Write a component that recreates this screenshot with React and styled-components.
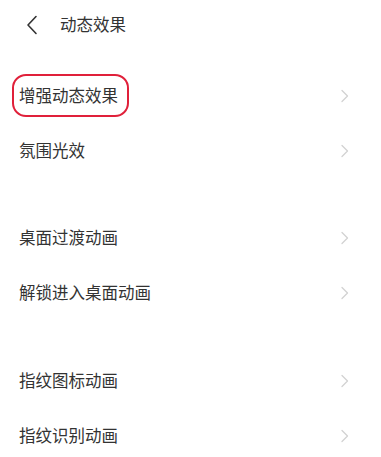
import React from "react";
import styled, { createGlobalStyle } from "styled-components";

const GlobalStyle = createGlobalStyle`
	html, body {
		margin: 0;
		padding: 0;
		background: #ffffff;
	}
	body {
		font-family: "Noto Sans CJK SC", "Noto Sans", sans-serif;
		color: #333333;
	}
`;

const Page = styled.div`
	width: 381px;
	min-height: 457px;
	background: #ffffff;
	overflow: hidden;
`;

const Header = styled.header`
	display: flex;
	align-items: center;
	height: 49px;
	padding-left: 24px;
	gap: 20px;
`;

const BackButton = styled.button`
	display: flex;
	align-items: center;
	justify-content: center;
	width: 16px;
	height: 24px;
	padding: 0;
	border: none;
	background: transparent;
	color: #333333;
	cursor: pointer;
`;

const Title = styled.h1`
	margin: 0;
	font-size: 16.5px;
	font-weight: 400;
	line-height: 1;
	color: #333333;
`;

const Section = styled.section`
	display: flex;
	flex-direction: column;
	padding-top: ${(props) => props.gap || 0}px;
`;

const Row = styled.div`
	display: flex;
	align-items: center;
	justify-content: space-between;
	height: 55px;
	padding: 0 32px 0 19px;
`;

const Label = styled.span`
	position: relative;
	font-size: 16.5px;
	line-height: 1;
	color: #333333;
	&::after {
		content: "";
		display: ${(props) => (props.highlight ? "block" : "none")};
		position: absolute;
		left: -7px;
		right: -11px;
		top: -13px;
		bottom: -13px;
		border: 2.5px solid #e0203a;
		border-radius: 14px;
	}
`;

const Chevron = () => (
	<svg width='9' height='16' viewBox='0 0 9 16' fill='none'>
		<path
			d='M2 2.5l5.5 5.5 -5.5 5.5'
			stroke='#d2d2d2'
			strokeWidth='1.3'
			strokeLinecap='round'
			strokeLinejoin='round'
		/>
	</svg>
);

const sections = [
	{ gap: 19, items: ["增强动态效果", "氛围光效"] },
	{ gap: 32, items: ["桌面过渡动画", "解锁进入桌面动画"] },
	{ gap: 33, items: ["指纹图标动画", "指纹识别动画"] },
];

export default function App() {
	return (
		<Page>
			<GlobalStyle />
			<Header>
				<BackButton aria-label='返回'>
					<svg width='12' height='20' viewBox='0 0 12 20' fill='none'>
						<path
							d='M10 1.5L2 10l8 8.5'
							stroke='#333333'
							strokeWidth='1.6'
							strokeLinecap='round'
							strokeLinejoin='round'
						/>
					</svg>
				</BackButton>
				<Title>动态效果</Title>
			</Header>
			{sections.map((section, i) => (
				<Section key={i} gap={section.gap}>
					{section.items.map((item, j) => (
						<Row key={item}>
							<Label highlight={i === 0 && j === 0}>{item}</Label>
							<Chevron />
						</Row>
					))}
				</Section>
			))}
		</Page>
	);
}
